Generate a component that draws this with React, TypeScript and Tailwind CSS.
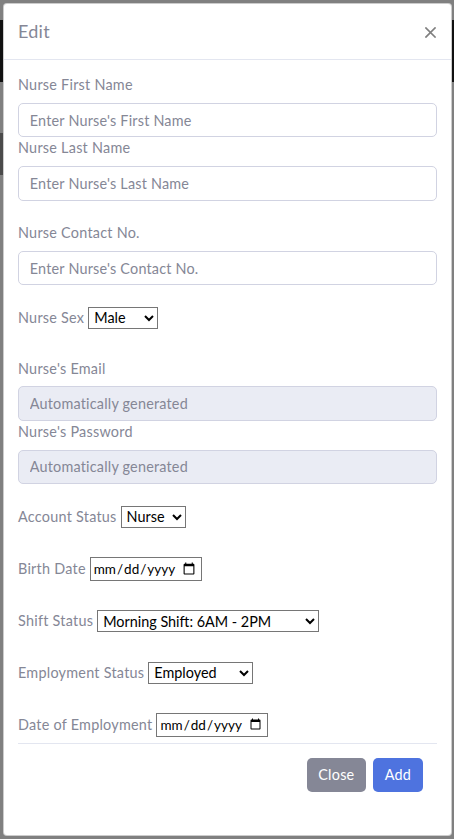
import React from 'react';

const labelCls = 'block h-[21.6px] leading-[21.6px] text-[#858796]';
const inputCls =
  'block w-full h-[34.4px] px-[10.8px] rounded-[5px] border border-[#d1d3e2] bg-white text-[#6e707e] placeholder:text-[#858796] outline-none tracking-[0.2px]';
const disabledCls =
  'block w-full h-[34.4px] px-[10.8px] rounded-[5px] border border-[#d1d3e2] bg-[#eaecf4] text-[#6e707e] placeholder:text-[#858796] outline-none tracking-[0.2px]';
const selectCls =
  'h-[22px] border border-[#767676] bg-white text-black text-[14.4px] tracking-normal pl-[1px] rounded-none';
const dateCls =
  'h-[24.5px] w-[112px] border border-[#767676] bg-white text-black text-[13.5px] tracking-normal pl-[2px] pr-[3px] rounded-none';

const Field = ({label, placeholder, disabled}: {label: string; placeholder: string; disabled?: boolean}) => (
  <div>
    <label className={labelCls + ' mb-[7.2px]'}>{label}</label>
    <input
      type="text"
      placeholder={placeholder}
      disabled={disabled}
      className={disabled ? disabledCls : inputCls}
    />
  </div>
);

const InlineRow = ({label, children, h}: {label: string; children: React.ReactNode; h: string}) => (
  <div className={'flex items-center gap-[4px] ' + h}>
    <span className="text-[#858796]">{label}</span>
    {children}
  </div>
);

export default function App() {
  return (
    <div
      className="relative w-[454px] h-[839px] overflow-hidden bg-[#808080] text-[14.4px] tracking-[0.25px]"
      style={{fontFamily: 'Lato, "Noto Sans", sans-serif'}}
    >
      {/* page underneath the backdrop */}
      <div className="h-[20px]" />
      <div className="h-[62px] bg-[#101010]" />
      <div className="mt-[51px] h-[42px] bg-[#4a4a4a] w-[6px]" />

      {/* modal */}
      <div className="absolute left-[3px] top-[3px] w-[449px] h-[833px] bg-white rounded-[4px] border border-black/20 flex flex-col">
        <div className="flex items-start justify-between px-[14px] pt-[14.4px] pb-[13.4px] border-b border-[#e3e6f0]">
          <h5 className="text-[18px] leading-[27px] text-[#858796]">Edit</h5>
          <button className="mt-[9px] mr-[1px]" aria-label="Close">
            <svg width="11" height="11" viewBox="0 0 11 11">
              <path d="M1 1L10 10M10 1L1 10" stroke="#7f7f7f" strokeWidth="1.7" strokeLinecap="square" />
            </svg>
          </button>
        </div>

        <div className="px-[14px] pt-[14.4px] flex flex-col">
          <Field label="Nurse First Name" placeholder="Enter Nurse's First Name" />
          <Field label="Nurse Last Name" placeholder="Enter Nurse's Last Name" />
          <div className="h-[21.6px]" />
          <Field label="Nurse Contact No." placeholder="Enter Nurse's Contact No." />
          <div className="h-[21.6px]" />

          <InlineRow label="Nurse Sex" h="h-[22px]">
            <select className={selectCls + ' w-[70px]'} defaultValue="Male">
              <option>Male</option>
              <option>Female</option>
            </select>
          </InlineRow>
          <div className="h-[28.8px]" />

          <Field label="Nurse's Email" placeholder="Automatically generated" disabled />
          <Field label="Nurse's Password" placeholder="Automatically generated" disabled />
          <div className="h-[21.6px]" />

          <InlineRow label="Account Status" h="h-[22px]">
            <select className={selectCls + ' w-[65px]'} defaultValue="Nurse">
              <option>Nurse</option>
              <option>Admin</option>
            </select>
          </InlineRow>
          <div className="h-[29.5px]" />

          <InlineRow label="Birth Date" h="h-[24px]">
            <input type="date" className={dateCls} />
          </InlineRow>
          <div className="h-[29px]" />

          <InlineRow label="Shift Status" h="h-[22px]">
            <select className={selectCls + ' w-[222px]'} defaultValue="m">
              <option value="m">Morning Shift: 6AM - 2PM</option>
              <option value="a">Afternoon Shift: 2PM - 10PM</option>
              <option value="n">Night Shift: 10PM - 6AM</option>
            </select>
          </InlineRow>
          <div className="h-[29.5px]" />

          <InlineRow label="Employment Status" h="h-[22px]">
            <select className={selectCls + ' w-[105px]'} defaultValue="Employed">
              <option>Employed</option>
              <option>Resigned</option>
            </select>
          </InlineRow>
          <div className="h-[29.5px]" />

          <InlineRow label="Date of Employment" h="h-[24px]">
            <input type="date" className={dateCls} />
          </InlineRow>

          <div className="mt-[6px] border-t border-[#e3e6f0] flex justify-end gap-[7.2px] pt-[13.4px] pr-[14.4px]">
            <button className="h-[34.4px] px-[11.5px] rounded-[5px] bg-[#858796] text-white">Close</button>
            <button className="h-[34.4px] px-[11.5px] rounded-[5px] bg-[#4e73df] text-white">Add</button>
          </div>
        </div>
      </div>
    </div>
  );
}
